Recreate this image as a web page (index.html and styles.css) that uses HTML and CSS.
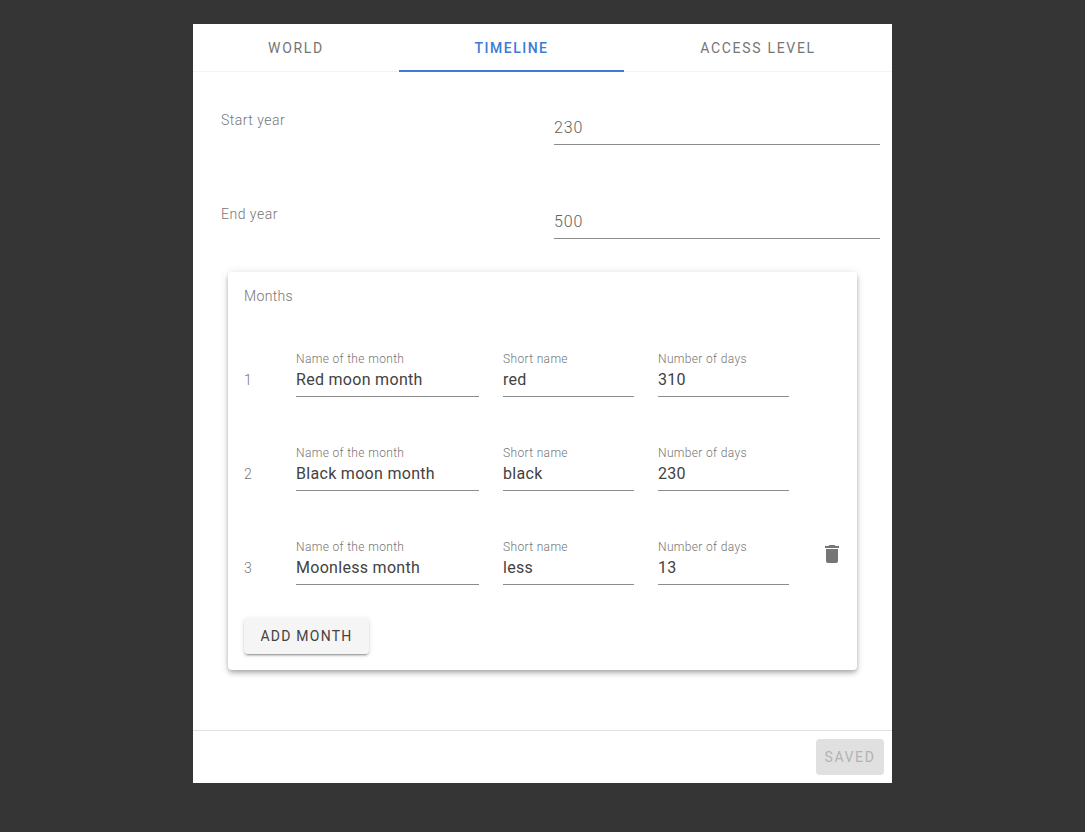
FILE: index.html
```html
<!DOCTYPE html>
<html lang="en">
<head>
  <meta charset="UTF-8" />
  <meta name="viewport" content="width=device-width, initial-scale=1.0" />
  <title>World settings</title>
  <link rel="stylesheet" href="styles.css">
</head>
<body>
  <div class="dialog">
    <nav class="tabs">
      <a href="#world" class="tab">World</a>
      <a href="#timeline" class="tab active">Timeline</a>
      <a href="#access" class="tab">Access level</a>
    </nav>

    <div class="content">
      <div class="year-row">
        <label class="year-label" for="start-year">Start year</label>
        <input class="year-input" type="text" id="start-year" value="230">
      </div>
      <div class="year-row">
        <label class="year-label" for="end-year">End year</label>
        <input class="year-input" type="text" id="end-year" value="500">
      </div>

      <div class="card">
        <div class="card-title">Months</div>

        <div class="month-row">
          <span class="month-index">1</span>
          <div class="field name-field">
            <label for="name-1">Name of the month</label>
            <input type="text" id="name-1" value="Red moon month">
          </div>
          <div class="field short-field">
            <label for="short-1">Short name</label>
            <input type="text" id="short-1" value="red">
          </div>
          <div class="field days-field">
            <label for="days-1">Number of days</label>
            <input type="text" id="days-1" value="310">
          </div>
        </div>

        <div class="month-row">
          <span class="month-index">2</span>
          <div class="field name-field">
            <label for="name-2">Name of the month</label>
            <input type="text" id="name-2" value="Black moon month">
          </div>
          <div class="field short-field">
            <label for="short-2">Short name</label>
            <input type="text" id="short-2" value="black">
          </div>
          <div class="field days-field">
            <label for="days-2">Number of days</label>
            <input type="text" id="days-2" value="230">
          </div>
        </div>

        <div class="month-row">
          <span class="month-index">3</span>
          <div class="field name-field">
            <label for="name-3">Name of the month</label>
            <input type="text" id="name-3" value="Moonless month">
          </div>
          <div class="field short-field">
            <label for="short-3">Short name</label>
            <input type="text" id="short-3" value="less">
          </div>
          <div class="field days-field">
            <label for="days-3">Number of days</label>
            <input type="text" id="days-3" value="13">
          </div>
          <button type="button" class="delete-btn" aria-label="Delete month">
            <svg viewBox="0 0 24 24" width="24" height="24"><path d="M6 19c0 1.1.9 2 2 2h8c1.1 0 2-.9 2-2V7H6v12zM19 4h-3.5l-1-1h-5l-1 1H5v2h14V4z"/></svg>
          </button>
        </div>

        <button type="button" class="add-btn">Add month</button>
      </div>
    </div>

    <footer class="dialog-footer">
      <button type="button" class="save-btn" disabled>Saved</button>
    </footer>
  </div>
</body>
</html>
```

FILE: styles.css
```css
body {
  font-family: Roboto, 'Noto Sans', sans-serif;
  margin: 0;
  padding: 24px 0 0 193px;
  background-color: #353535;
}
.dialog {
  width: 699px;
  background-color: white;
}
.tabs {
  display: grid;
  grid-template-columns: 206px 225px 1fr;
  height: 48px;
  box-shadow: inset 0 -1px 0 #f3f3f3;
}
.tab {
  display: flex;
  align-items: center;
  justify-content: center;
  color: #757575;
  font-size: 14px;
  letter-spacing: 1.7px;
  text-transform: uppercase;
  text-decoration: none;
}
.tab.active {
  color: #3a7bd5;
  font-weight: 500;
  letter-spacing: 1.5px;
  box-shadow: inset 0 -2px 0 #3a7bd5;
}
.content {
  height: 658px;
  padding: 26px 12px 0 28px;
  box-sizing: border-box;
}
.year-row {
  display: flex;
  height: 94px;
}
.year-label {
  width: 333px;
  margin-top: 14px;
  color: #757575;
  font-size: 14px;
  font-weight: 300;
  letter-spacing: 0.5px;
}
.year-input {
  flex: 1;
  height: 47px;
  padding: 13px 0 0 0;
  box-sizing: border-box;
  border: none;
  border-bottom: 1px solid #8c8c8c;
  color: #616161;
  font-family: inherit;
  font-size: 16px;
  font-weight: 300;
  letter-spacing: 0.9px;
  outline: none;
}
.card {
  width: 629px;
  margin: -14px 0 0 7px;
  padding: 16px;
  box-sizing: border-box;
  border-radius: 4px;
  box-shadow: 0 2px 4px -1px rgba(0, 0, 0, 0.2), 0 4px 5px 0 rgba(0, 0, 0, 0.14), 0 1px 10px 0 rgba(0, 0, 0, 0.12);
}
.card-title {
  height: 15px;
  color: #757575;
  font-size: 14px;
  font-weight: 300;
  line-height: 17px;
  letter-spacing: 0.35px;
}
.month-row {
  display: flex;
  align-items: flex-end;
  gap: 24px;
  height: 94px;
}
.month-index {
  flex: none;
  width: 28px;
  height: 26px;
  color: #757575;
  font-size: 14px;
  font-weight: 300;
  line-height: 18px;
}
.field {
  flex: none;
  display: flex;
  flex-direction: column;
}
.field label {
  color: #757575;
  font-size: 12px;
  line-height: 14px;
  font-weight: 300;
  letter-spacing: 0.35px;
}
.field input {
  width: 100%;
  height: 31px;
  padding: 0 0 4px 0;
  box-sizing: border-box;
  border: none;
  border-bottom: 1px solid #8c8c8c;
  color: #424242;
  font-family: inherit;
  font-size: 16px;
  letter-spacing: 0.3px;
  outline: none;
}
.name-field {
  width: 183px;
}
.short-field,
.days-field {
  width: 131px;
}
.delete-btn {
  flex: none;
  align-self: flex-start;
  width: 24px;
  height: 24px;
  margin: 51px 0 0 7px;
  padding: 0;
  border: none;
  background: none;
  fill: #757575;
  cursor: pointer;
}
.add-btn {
  display: block;
  width: 125px;
  height: 36px;
  margin-top: 33px;
  border: none;
  border-radius: 4px;
  background-color: #f5f5f5;
  box-shadow: 0 3px 1px -2px rgba(0, 0, 0, 0.2), 0 2px 2px 0 rgba(0, 0, 0, 0.14), 0 1px 5px 0 rgba(0, 0, 0, 0.12);
  color: #424242;
  font-family: inherit;
  font-size: 14px;
  letter-spacing: 1.25px;
  text-transform: uppercase;
  cursor: pointer;
}
.dialog-footer {
  display: flex;
  justify-content: flex-end;
  padding: 8px;
  border-top: 1px solid #e0e0e0;
}
.save-btn {
  width: 68px;
  height: 36px;
  padding: 0;
  border: none;
  border-radius: 4px;
  background-color: #e0e0e0;
  color: #b3b3b3;
  font-family: inherit;
  font-size: 14px;
  letter-spacing: 1.6px;
  text-transform: uppercase;
}
```
